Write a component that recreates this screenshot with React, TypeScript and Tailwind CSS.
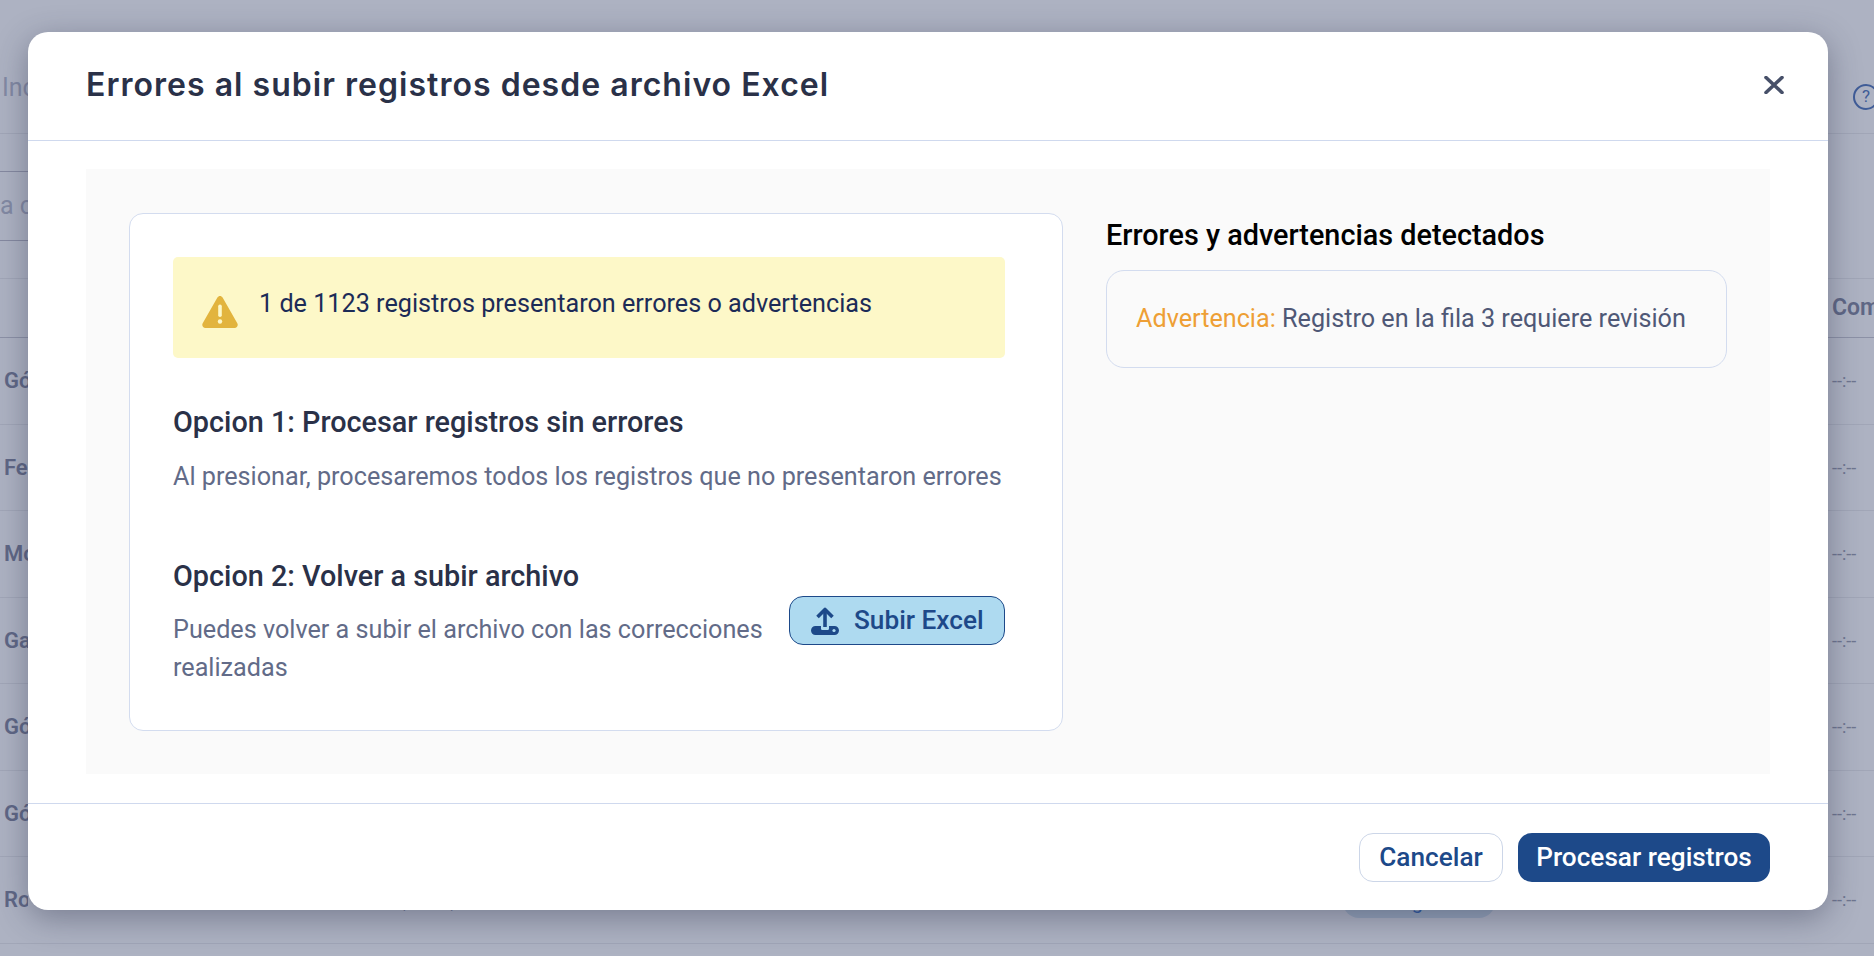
import React from "react";

const rows = ["Gómez", "Fernández", "Morales", "García", "Gómez", "Gómez", "Rojas"];

const Background: React.FC = () => {
  return (
    <div className="h-[956px] w-[1874px] overflow-hidden bg-[#adb2c2] font-['Roboto',sans-serif] text-[#6b7390]">
      <div className="flex h-[134px] items-start justify-between border-b border-[#a1a6b7] pt-[72px] pl-[2px]">
        <span className="w-[26px] overflow-hidden text-[25px] leading-[32px] whitespace-nowrap text-[#8289a3]">Incidencias</span>
        <span className="mt-[12px] mr-[-5px] flex h-[26px] w-[26px] items-center justify-center rounded-full border-2 border-[#3f5c97] text-[17px] text-[#3f5c97]">?</span>
      </div>
      <div className="h-[144px] pt-[37px]">
        <div className="flex h-[70px] w-[28px] items-center overflow-hidden border-y border-[#8589a0] text-[25px] whitespace-nowrap text-[#8289a3]">
          a cargar
        </div>
      </div>
      <div className="flex h-[60px] items-center justify-between border-y border-t-[#a1a6b7] border-b-[#8c91a6] pr-[0px] pl-[2px]">
        <span></span>
        <span className="w-[42px] overflow-hidden text-[23px] font-semibold whitespace-nowrap text-[#5f6785]">Comentario</span>
      </div>
      {rows.map((name, i) => (
        <div key={i} className="relative flex h-[86.5px] items-center justify-between border-b border-[#a1a6b7] pl-[4px]">
          <span className="w-[24px] overflow-hidden text-[22px] font-semibold whitespace-nowrap text-[#5f6785]">{name}</span>
          {i === 6 && (
            <span className="absolute top-[28px] left-[398px] text-[22px] leading-[27px] tracking-[2px] text-[#5f6785]">(000)</span>
          )}
          {i === 6 && (
            <span className="absolute top-[28px] left-[1343px] flex h-[33px] w-[152px] items-center justify-center rounded-[16px] bg-[#94a3ba] text-[20px] text-[#2f5aa0]">Cargado</span>
          )}
          <span className="w-[42px] text-[18px] text-[#6f7690]">--:--</span>
        </div>
      ))}
    </div>
  );
};

const UploadIcon: React.FC = () => (
  <svg width="28" height="28" viewBox="0 0 28 28" fill="none">
    <path d="M14 3V20" stroke="#1d4989" strokeWidth="3.6" />
    <path d="M6.5 10L14 2.5L21.5 10" stroke="#1d4989" strokeWidth="3.6" strokeLinejoin="round" />
    <path d="M4.5 19H10V21.5C10 22.5 10.8 23 11.6 23H16.4C17.2 23 18 22.5 18 21.5V19H23.5C26 19 28 21 28 23.5C28 26 26 28 23.5 28H4.5C2 28 0 26 0 23.5C0 21 2 19 4.5 19Z" fill="#1d4989" />
    <circle cx="23" cy="23.5" r="1.6" fill="#aedaf0" />
  </svg>
);

const WarningIcon: React.FC = () => (
  <svg width="36" height="32" viewBox="0 0 36 32" className="shrink-0">
    <path d="M15.4 1.6C16.6 -0.5 19.4 -0.5 20.6 1.6L35.3 27.2C36.5 29.3 35 32 32.6 32H3.4C1 32 -0.5 29.3 0.7 27.2Z" fill="#e2b43e" />
    <rect x="16.2" y="8.5" width="3.6" height="12.5" rx="1.8" fill="#fdf8c8" />
    <circle cx="18" cy="25.5" r="2.2" fill="#fdf8c8" />
  </svg>
);

const App: React.FC = () => {
  return (
    <div className="relative h-[956px] w-[1874px] overflow-hidden">
      <Background />
      <div className="absolute inset-0 pt-[32px] pl-[28px] font-['Roboto',sans-serif]">
        <div className="flex h-[878px] w-[1800px] flex-col rounded-[20px] bg-white shadow-[0_8px_32px_rgba(40,44,70,0.4)]">
          <div className="flex h-[109px] shrink-0 items-center justify-between border-b border-[#cfd9ee] pr-[44px] pb-[2px] pl-[58px]">
            <h1 className="font-['Inter',sans-serif] text-[32px] font-semibold tracking-[1.03px] text-[#2a3148]">
              Errores al subir registros desde archivo Excel
            </h1>
            <svg width="20" height="18" viewBox="0 0 20 18" fill="none">
              <path d="M2 1.5L18 16.5M18 1.5L2 16.5" stroke="#475069" strokeWidth="3.6" strokeLinecap="round" />
            </svg>
          </div>

          <div className="flex-1 px-[58px] pt-[28px]">
            <div className="flex h-[605px] gap-[43px] bg-[#fafafa] pt-[44px] pr-[43px] pl-[43px]">
              <div className="h-[518px] w-[934px] shrink-0 rounded-[14px] border border-[#d3dcef] bg-white pt-[43px] pr-[57px] pl-[43px]">
                <div className="flex h-[101px] items-center gap-[21px] rounded-[5px] bg-[#fdf8c8] pl-[29px]">
                  <div className="mt-[8px]"><WarningIcon /></div>
                  <span className="mb-[8px] text-[25.2px] leading-[38px] text-[#1c2b57]">
                    1 de 1123 registros presentaron errores o advertencias
                  </span>
                </div>

                <h2 className="mt-[45px] text-[28.8px] leading-[38px] font-medium text-[#2a3148]">
                  Opcion 1: Procesar registros sin errores
                </h2>
                <p className="mt-[17px] text-[25.2px] leading-[38px] whitespace-nowrap text-[#626b88]">
                  Al presionar, procesaremos todos los registros que no presentaron errores
                </p>

                <h2 className="mt-[61px] text-[28.8px] leading-[38px] font-medium text-[#2a3148]">
                  Opcion 2: Volver a subir archivo
                </h2>
                <div className="mt-[1px] flex items-start justify-between">
                  <p className="mt-[15px] w-[610px] text-[25.2px] leading-[38px] text-[#626b88]">
                    Puedes volver a subir el archivo con las correcciones realizadas
                  </p>
                  <button className="flex h-[49px] w-[216px] items-center gap-[15px] rounded-[14px] border border-[#1d4989] bg-[#aedaf0] pl-[21px] text-[26.2px] font-medium text-[#1d4989]">
                    <UploadIcon />
                    Subir Excel
                  </button>
                </div>
              </div>

              <div className="flex-1 pt-[3px]">
                <h3 className="text-[28.8px] leading-[38px] font-medium text-black">
                  Errores y advertencias detectados
                </h3>
                <div className="mt-[16px] flex h-[98px] items-center rounded-[18px] border border-[#d3dcef] pl-[29px]">
                  <p className="text-[25.2px] leading-[38px] whitespace-nowrap text-[#4f5876]">
                    <span className="text-[#ee9f35]">Advertencia: </span>
                    Registro en la fila 3 requiere revisión
                  </p>
                </div>
              </div>
            </div>
          </div>

          <div className="flex h-[107px] shrink-0 items-start justify-end gap-[15px] border-t border-[#cfd9ee] pt-[29px] pr-[58px]">
            <button className="h-[49px] w-[144px] rounded-[14px] border border-[#ccd6e8] bg-white text-[26.2px] font-medium text-[#1d4989]">
              Cancelar
            </button>
            <button className="h-[49px] w-[252px] rounded-[14px] bg-[#1d4989] text-[26.2px] font-medium text-white">
              Procesar registros
            </button>
          </div>
        </div>
      </div>
    </div>
  );
};

export default App;
